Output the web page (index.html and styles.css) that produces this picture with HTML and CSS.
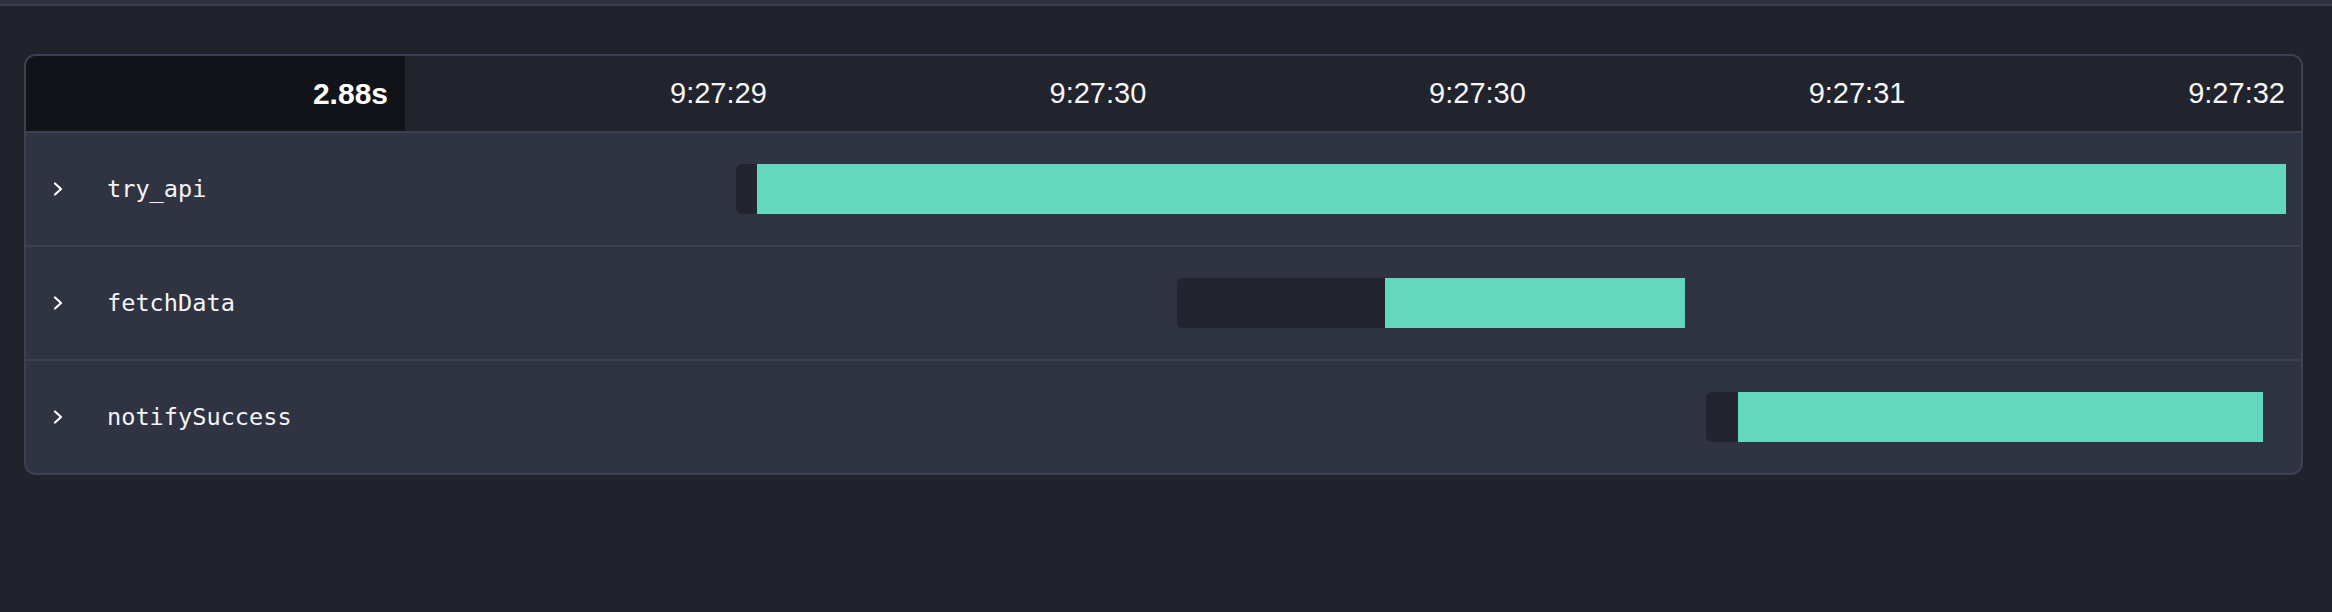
FILE: index.html
```html
<!DOCTYPE html>
<html lang="en">
<head>
<meta charset="utf-8">
<title>Trace timeline</title>
<link rel="stylesheet" href="styles.css">
</head>
<body>
<div class="topbar"></div>
<section class="trace">
  <div class="trace-head">
    <div class="duration">2.88s</div>
    <div class="ticks">
      <span class="tick">9:27:29</span>
      <span class="tick">9:27:30</span>
      <span class="tick">9:27:30</span>
      <span class="tick">9:27:31</span>
      <span class="tick">9:27:32</span>
    </div>
  </div>
  <div class="span-row">
    <div class="span-name">
      <svg class="chev" width="12" height="14" viewBox="0 0 12 14"><path d="M3 1.5 L9 7 L3 12.5" fill="none" stroke="#ffffff" stroke-width="2.2" stroke-linecap="round" stroke-linejoin="round"/></svg>
      <span class="label">try_api</span>
    </div>
    <div class="span-track">
      <div class="bar" style="margin-left:331px">
        <div class="bar-wait" style="width:21px"></div>
        <div class="bar-run" style="width:1529px"></div>
      </div>
    </div>
  </div>
  <div class="span-row">
    <div class="span-name">
      <svg class="chev" width="12" height="14" viewBox="0 0 12 14"><path d="M3 1.5 L9 7 L3 12.5" fill="none" stroke="#ffffff" stroke-width="2.2" stroke-linecap="round" stroke-linejoin="round"/></svg>
      <span class="label">fetchData</span>
    </div>
    <div class="span-track">
      <div class="bar" style="margin-left:772px">
        <div class="bar-wait" style="width:208px"></div>
        <div class="bar-run" style="width:300px"></div>
      </div>
    </div>
  </div>
  <div class="span-row">
    <div class="span-name">
      <svg class="chev" width="12" height="14" viewBox="0 0 12 14"><path d="M3 1.5 L9 7 L3 12.5" fill="none" stroke="#ffffff" stroke-width="2.2" stroke-linecap="round" stroke-linejoin="round"/></svg>
      <span class="label">notifySuccess</span>
    </div>
    <div class="span-track">
      <div class="bar" style="margin-left:1301px">
        <div class="bar-wait" style="width:32px"></div>
        <div class="bar-run" style="width:525px"></div>
      </div>
    </div>
  </div>
</section>
</body>
</html>
```

FILE: styles.css
```css
html, body {
  margin: 0;
  padding: 0;
  background: #21232c;
  height: 100%;
}

body {
  font-family: "Liberation Sans", Arial, sans-serif;
  color: #f5f5f7;
}

.topbar {
  height: 4px;
  background: #2e3140;
  border-bottom: 2px solid #3b3e50;
}

.trace {
  margin: 48px 29px 0 24px;
  border: 2px solid #3d4053;
  border-radius: 12px;
  overflow: hidden;
  background: #303342;
}

.trace-head {
  display: grid;
  grid-template-columns: 379px 1fr;
  height: 75px;
  border-bottom: 2px solid #3d4053;
  background: #21232d;
}

.duration {
  background: #121318;
  display: flex;
  align-items: center;
  justify-content: flex-end;
  padding-right: 17px;
  font-weight: 700;
  font-size: 30px;
  color: #ffffff;
}

.ticks {
  display: flex;
  align-items: center;
  justify-content: space-between;
  padding: 0 16px 0 265px;
}

.tick {
  font-size: 29px;
  color: #f7f7f8;
}

.span-row {
  display: grid;
  grid-template-columns: 379px 1fr;
  height: 112px;
  border-bottom: 2px solid #3d4053;
}

.span-row:last-child {
  border-bottom: none;
}

.span-name {
  display: flex;
  align-items: center;
  padding-left: 26px;
  gap: 43px;
}

.chev {
  flex: none;
}

.label {
  font-family: "DejaVu Sans Mono", "Liberation Mono", monospace;
  font-size: 23.6px;
  color: #f5f5f7;
}

.span-track {
  display: flex;
  align-items: center;
}

.bar {
  display: flex;
  height: 50px;
}

.bar-wait {
  background: #22252f;
  border-radius: 6px 0 0 6px;
}

.bar-run {
  background: #63d8bd;
}
```
